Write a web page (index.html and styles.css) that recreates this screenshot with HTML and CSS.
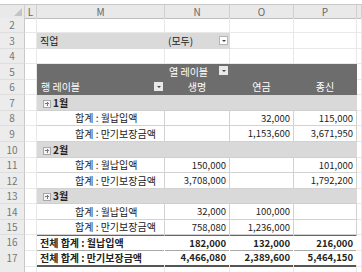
FILE: index.html
```html
<!DOCTYPE html>
<html>
<head>
    <meta charset="UTF-8">
    <title>피벗 테이블</title>
    <link rel="stylesheet" href="styles.css">
</head>
<body>
    <div class="sheet">
        <div class="row colhead">
            <div class="corner"></div><div>L</div><div>M</div><div>N</div><div>O</div><div>P</div><div></div>
        </div>
        <div class="row h15">
            <div class="rn">2</div><div></div><div></div><div></div><div></div><div></div><div></div>
        </div>
        <div class="row h16">
            <div class="rn">3</div><div></div>
            <div class="filter">직업</div>
            <div class="filter">(모두)<span class="dd"></span></div>
            <div></div><div></div><div></div>
        </div>
        <div class="row h15">
            <div class="rn">4</div><div></div><div></div><div></div><div></div><div></div><div></div>
        </div>
        <div class="row h16">
            <div class="rn">5</div><div></div>
            <div class="hd"></div>
            <div class="hd">열 레이블<span class="dd dark"></span></div>
            <div class="hd"></div><div class="hd"></div><div></div>
        </div>
        <div class="row h15">
            <div class="rn">6</div><div></div>
            <div class="hd">행 레이블<span class="dd dark"></span></div>
            <div class="hd mid">생명</div>
            <div class="hd mid">연금</div>
            <div class="hd mid">종신</div>
            <div></div>
        </div>

        <div class="row h16">
            <div class="rn">7</div><div></div>
            <div class="grp"><i class="plus"></i>1월</div>
            <div class="grp"></div><div class="grp"></div><div class="grp"></div><div></div>
        </div>
        <div class="row h15">
            <div class="rn">8</div><div></div>
            <div class="pv item">합계 : 월납입액</div>
            <div class="pv num"></div>
            <div class="pv num">32,000</div>
            <div class="pv num">115,000</div>
            <div></div>
        </div>
        <div class="row h16">
            <div class="rn">9</div><div></div>
            <div class="pv item">합계 : 만기보장금액</div>
            <div class="pv num"></div>
            <div class="pv num">1,153,600</div>
            <div class="pv num">3,671,950</div>
            <div></div>
        </div>

        <div class="row h16">
            <div class="rn">10</div><div></div>
            <div class="grp"><i class="plus"></i>2월</div>
            <div class="grp"></div><div class="grp"></div><div class="grp"></div><div></div>
        </div>
        <div class="row h15">
            <div class="rn">11</div><div></div>
            <div class="pv item">합계 : 월납입액</div>
            <div class="pv num">150,000</div>
            <div class="pv num"></div>
            <div class="pv num">101,000</div>
            <div></div>
        </div>
        <div class="row h16">
            <div class="rn">12</div><div></div>
            <div class="pv item">합계 : 만기보장금액</div>
            <div class="pv num">3,708,000</div>
            <div class="pv num"></div>
            <div class="pv num">1,792,200</div>
            <div></div>
        </div>

        <div class="row h15">
            <div class="rn">13</div><div></div>
            <div class="grp"><i class="plus"></i>3월</div>
            <div class="grp"></div><div class="grp"></div><div class="grp"></div><div></div>
        </div>
        <div class="row h16">
            <div class="rn">14</div><div></div>
            <div class="pv item">합계 : 월납입액</div>
            <div class="pv num">32,000</div>
            <div class="pv num">100,000</div>
            <div class="pv num"></div>
            <div></div>
        </div>
        <div class="row h15">
            <div class="rn">15</div><div></div>
            <div class="pv item">합계 : 만기보장금액</div>
            <div class="pv num">758,080</div>
            <div class="pv num">1,236,000</div>
            <div class="pv num"></div>
            <div></div>
        </div>

        <div class="row h15">
            <div class="rn">16</div><div></div>
            <div class="tot first">전체 합계 : 월납입액</div>
            <div class="tot first num">182,000</div>
            <div class="tot first num">132,000</div>
            <div class="tot first num">216,000</div>
            <div></div>
        </div>
        <div class="row h16">
            <div class="rn">17</div><div></div>
            <div class="tot last">전체 합계 : 만기보장금액</div>
            <div class="tot last num">4,466,080</div>
            <div class="tot last num">2,389,600</div>
            <div class="tot last num">5,464,150</div>
            <div></div>
        </div>
        <div class="row h15">
            <div class="rn"></div><div></div><div></div><div></div><div></div><div></div><div></div>
        </div>
    </div>
</body>
</html>
```

FILE: styles.css
```css
* {
    margin: 0;
    padding: 0;
    box-sizing: border-box;
}
body {
    width: 362px;
    height: 272px;
    overflow: hidden;
    background: #fff;
    font-family: "Noto Sans CJK KR", "Noto Sans", sans-serif;
    font-size: 10px;
    color: #222;
}
.sheet { padding-top: 4px; }

.row {
    display: grid;
    grid-template-columns: 25px 12px 128px 65px 64px 63px 1fr;
}
.row > div {
    border-right: 1px solid #e8e8e8;
    border-bottom: 1px solid #e8e8e8;
    white-space: nowrap;
    overflow: visible;
    position: relative;
}
.h15 { height: 15px; line-height: 14px; }
.h16 { height: 16px; line-height: 15px; }

/* column letters */
.colhead { height: 14px; line-height: 13px; background: #e9e9e9; border-top: 1px solid #c9c9c9; }
.colhead > div {
    border-right: 1px solid #cfcfcf;
    border-bottom: 1px solid #bdbdbd;
    color: #666;
    text-align: center;
}
.corner::after {
    content: "";
    position: absolute;
    right: 2px;
    bottom: 2px;
    border-left: 8px solid transparent;
    border-bottom: 8px solid #c4c4c4;
}

/* row numbers */
.row > .rn {
    background: #ececec;
    border-right: 1px solid #c9c9c9;
    border-bottom: 1px solid #dedede;
    color: #777;
    text-align: center;
}

/* report filter */
.row > .filter {
    background: #dadada;
    border-color: #dadada;
    padding-left: 3px;
}

/* dark header */
.row > .hd {
    background: #6d6d6d;
    border-color: #6d6d6d;
    color: #fff;
    padding-left: 4px;
}
.row > .mid { text-align: center; padding-left: 0; }

.dd {
    position: absolute;
    right: 1px;
    top: 3px;
    width: 9px;
    height: 9px;
    background: #fff;
    border: 1px solid #b5b5b5;
}
.dd::after {
    content: "";
    position: absolute;
    left: 2px;
    top: 3px;
    border-left: 2px solid transparent;
    border-right: 2px solid transparent;
    border-top: 2px solid #444;
}
.dd.dark { background: #e9e9e9; border-color: #e9e9e9; top: 2px; }

/* group rows */
.row > .grp {
    background: #d9d9d9;
    border-color: #d9d9d9;
    border-bottom-color: #cfcfcf;
    font-weight: bold;
    padding-left: 6px;
}
.plus {
    display: inline-block;
    position: relative;
    width: 8px;
    height: 8px;
    margin-right: 2px;
    vertical-align: -1px;
    border: 1px solid #a8a8a8;
    background: #f4f4f4;
}
.plus::before, .plus::after {
    content: "";
    position: absolute;
    background: #777;
}
.plus::before { left: 1px; top: 2px; width: 4px; height: 1px; }
.plus::after { left: 2px; top: 1px; width: 1px; height: 4px; left: 2.5px; }

/* values */
.row > .pv {
    border-color: #d2d2d2;
}
.item { padding-left: 38px; }
.num { text-align: right; padding-right: 3px; font-size: 9.5px; }

/* grand totals */
.row > .tot {
    font-weight: bold;
    padding-left: 3px;
    border-right-color: #fff;
}
.row > .first { border-top: 1px solid #666; border-bottom: 1px solid #aaa; }
.row > .last { border-bottom: 2px solid #555; }
.row > .num.tot { padding-left: 0; }
```
